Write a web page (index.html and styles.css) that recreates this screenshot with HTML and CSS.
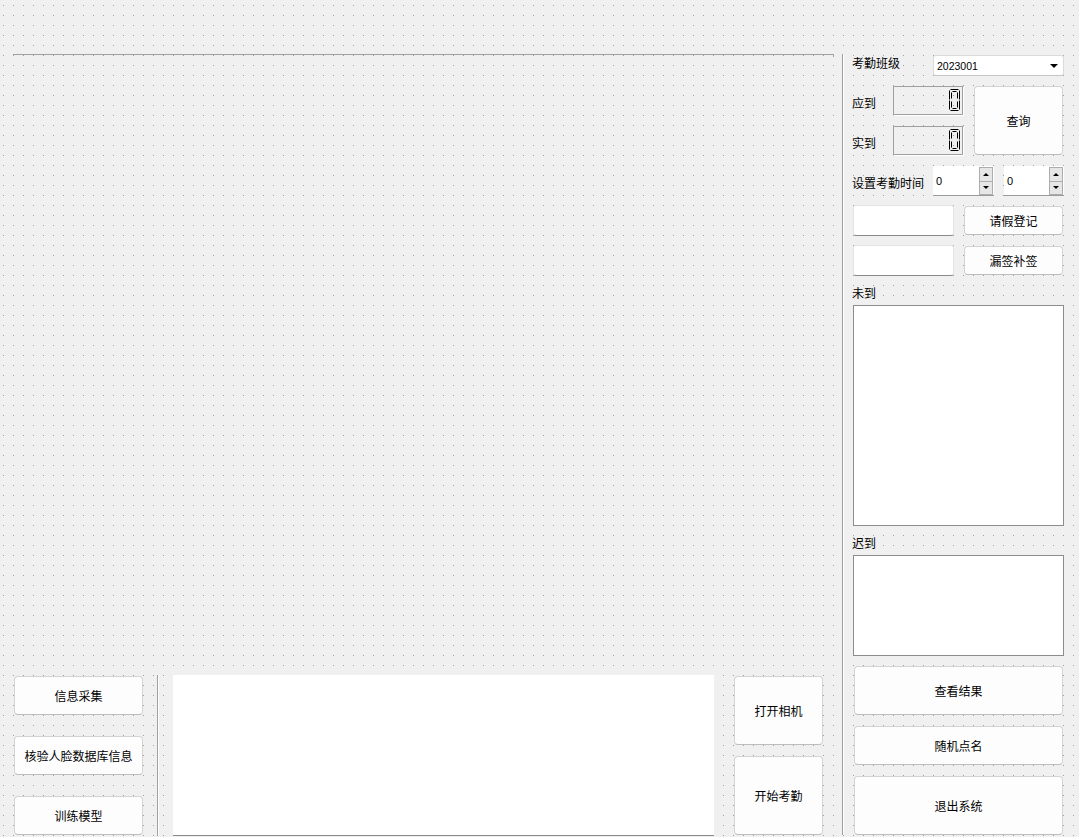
FILE: index.html
```html
<!DOCTYPE html>
<html lang="zh-CN">
<head>
<meta charset="utf-8">
<title>考勤系统</title>
<link rel="stylesheet" href="styles.css">
</head>
<body>
<div class="app">
  <div class="left">
    <div class="stage"><span class="tick"></span></div>
    <div class="bottom">
      <div class="btn-col">
        <button class="btn tool">信息采集</button>
        <button class="btn tool">核验人脸数据库信息</button>
        <button class="btn tool">训练模型</button>
      </div>
      <div class="vline"></div>
      <div class="log"></div>
      <div class="cam-col">
        <button class="btn cam-open">打开相机</button>
        <button class="btn cam-start">开始考勤</button>
      </div>
    </div>
  </div>

  <div class="right">
    <div class="row r-class">
      <span class="lbl w81 lbl-top">考勤班级</span>
      <div class="combo"><span class="combo-text">2023001</span><span class="combo-arrow"></span></div>
    </div>

    <div class="row r-count">
      <div class="lcd-col">
        <div class="lcd-row">
          <span class="lbl w41 lbl-mid">应到</span>
          <div class="lcd">
            <svg class="digit" width="11" height="22" viewBox="0 0 11 22">
              <g fill="none" stroke="#000" stroke-width="1">
                <polyline points="1.5,0.5 9.5,0.5"/>
                <polyline points="3.5,2.5 7.5,2.5"/>
                <polyline points="0.5,1.5 0.5,10.5"/>
                <polyline points="2.5,3.5 2.5,9.5"/>
                <polyline points="10.5,1.5 10.5,10.5"/>
                <polyline points="8.5,3.5 8.5,9.5"/>
                <polyline points="0.5,11.5 0.5,20.5"/>
                <polyline points="2.5,12.5 2.5,18.5"/>
                <polyline points="10.5,11.5 10.5,20.5"/>
                <polyline points="8.5,12.5 8.5,18.5"/>
                <polyline points="3.5,19.5 7.5,19.5"/>
                <polyline points="1.5,21.5 9.5,21.5"/>
              </g>
            </svg>
          </div>
        </div>
        <div class="lcd-row">
          <span class="lbl w41 lbl-mid">实到</span>
          <div class="lcd">
            <svg class="digit" width="11" height="22" viewBox="0 0 11 22">
              <g fill="none" stroke="#000" stroke-width="1">
                <polyline points="1.5,0.5 9.5,0.5"/>
                <polyline points="3.5,2.5 7.5,2.5"/>
                <polyline points="0.5,1.5 0.5,10.5"/>
                <polyline points="2.5,3.5 2.5,9.5"/>
                <polyline points="10.5,1.5 10.5,10.5"/>
                <polyline points="8.5,3.5 8.5,9.5"/>
                <polyline points="0.5,11.5 0.5,20.5"/>
                <polyline points="2.5,12.5 2.5,18.5"/>
                <polyline points="10.5,11.5 10.5,20.5"/>
                <polyline points="8.5,12.5 8.5,18.5"/>
                <polyline points="3.5,19.5 7.5,19.5"/>
                <polyline points="1.5,21.5 9.5,21.5"/>
              </g>
            </svg>
          </div>
        </div>
      </div>
      <button class="btn query">查询</button>
    </div>

    <div class="row r-time">
      <span class="lbl w81 lbl-mid">设置考勤时间</span>
      <div class="spin s1"><span class="spin-val">0</span><span class="spin-btns"><span class="sb up"></span><span class="sb down"></span></span></div>
      <div class="spin s2"><span class="spin-val">0</span><span class="spin-btns"><span class="sb up"></span><span class="sb down"></span></span></div>
    </div>

    <div class="row r-edit">
      <div class="edit"></div>
      <button class="btn small">请假登记</button>
    </div>
    <div class="row r-edit">
      <div class="edit"></div>
      <button class="btn small">漏签补签</button>
    </div>

    <span class="lbl sect">未到</span>
    <div class="list l-absent"></div>
    <span class="lbl sect">迟到</span>
    <div class="list l-late"></div>

    <button class="btn wide b-result">查看结果</button>
    <button class="btn wide b-random">随机点名</button>
    <button class="btn wide b-exit">退出系统</button>
  </div>
</div>
</body>
</html>
```

FILE: styles.css
```css
html, body {
  margin: 0;
  padding: 0;
}
body {
  width: 1079px;
  height: 837px;
  overflow: hidden;
  background-color: #f0f0f0;
  background-image:
    linear-gradient(to right, #f0f0f0 3px, transparent 3px, transparent 4px, #f0f0f0 4px),
    linear-gradient(to bottom, transparent 5px, #a0a0a0 5px, #a0a0a0 6px, transparent 6px);
  background-size: 10px 10px;
  font-family: "Noto Sans CJK SC", "Noto Sans", sans-serif;
  font-size: 12px;
  color: #000;
}

.app {
  display: flex;
  box-sizing: border-box;
  height: 837px;
  padding: 54px 0 0 13px;
}

/* ---------- left side ---------- */
.left {
  width: 821px;
  display: flex;
  flex-direction: column;
}
.stage {
  position: relative;
  height: 621px;
  border-top: 1px solid #a0a0a0;
  box-sizing: border-box;
}
.tick {
  position: absolute;
  right: 0;
  top: 0;
  width: 1px;
  height: 2px;
  background: #a0a0a0;
}
.bottom {
  display: flex;
  height: 161px;
}
.btn-col {
  display: flex;
  flex-direction: column;
  gap: 21px;
  margin: 1px 0 0 1px;
  width: 129px;
}
.vline {
  margin-left: 14px;
  width: 1px;
  height: 161px;
  background: #a0a0a0;
  box-shadow: 1px 0 0 #ffffff;
}
.log {
  margin-left: 15px;
  width: 541px;
  height: 161px;
  box-sizing: border-box;
  background: #ffffff;
  border-bottom: 1px solid #8a8a8a;
}
.cam-col {
  display: flex;
  flex-direction: column;
  gap: 11px;
  margin: 1px 0 0 20px;
  width: 89px;
}

/* ---------- buttons ---------- */
.btn {
  box-sizing: border-box;
  margin: 0;
  padding: 0;
  background: #fdfdfd;
  border: 1px solid #d3d3d3;
  border-bottom-color: #bdbdbd;
  border-radius: 4px;
  font-family: "Noto Sans CJK SC", "Noto Sans", sans-serif;
  font-size: 12px;
  color: #000;
  text-align: center;
}
.tool { height: 39px; width: 129px; }
.cam-open { height: 69px; }
.cam-start { height: 79px; }

/* ---------- right panel ---------- */
.right {
  box-sizing: border-box;
  margin-left: 8px;
  width: 237px;
  height: 781px;
  border-left: 1px solid #a0a0a0;
  box-shadow: inset 1px 0 0 #ffffff;
  padding-left: 10px;
  display: flex;
  flex-direction: column;
  align-items: flex-start;
}
.row {
  display: flex;
  align-items: flex-start;
}
.lbl {
  line-height: 12px;
  white-space: nowrap;
}
.w81 { width: 81px; margin-left: -1px; }
.w41 { width: 41px; margin-left: -1px; }
.lbl-top { margin-top: 2px; }
.lbl-mid { margin-top: 11px; }

.r-class { margin-top: 1px; height: 21px; }
.combo {
  box-sizing: border-box;
  width: 131px;
  height: 21px;
  background: #ffffff;
  border: 1px solid #dadada;
  border-bottom-color: #c4c4c4;
  border-radius: 3px;
  display: flex;
  align-items: center;
  justify-content: space-between;
  padding: 0 4px 0 3px;
}
.combo-text {
  font-family: "Liberation Sans", Arial, sans-serif;
  font-size: 10.5px;
  padding-top: 1px;
}
.combo-arrow {
  width: 0;
  height: 0;
  border-left: 4px solid transparent;
  border-right: 4px solid transparent;
  border-top: 4px solid #000;
  margin-right: 1px;
}

.r-count { margin-top: 10px; height: 70px; }
.lcd-col {
  display: flex;
  flex-direction: column;
  gap: 10px;
}
.lcd-row {
  display: flex;
  align-items: flex-start;
  height: 30px;
}
.lcd {
  box-sizing: border-box;
  width: 71px;
  height: 30px;
  border: 1px solid #a0a0a0;
  border-right-color: #ffffff;
  border-bottom-color: #ffffff;
  box-shadow: inset -1px -1px 0 #a0a0a0;
  display: flex;
  justify-content: flex-end;
  align-items: flex-start;
  padding: 2px 3px 0 0;
}
.digit { display: block; }
.query {
  margin-left: 10px;
  width: 89px;
  height: 69px;
}

.r-time { margin-top: 10px; height: 30px; }
.spin {
  box-sizing: border-box;
  height: 30px;
  background: #ffffff;
  border-bottom: 1px solid #9a9a9a;
  display: flex;
  align-items: center;
  justify-content: space-between;
  padding: 0 1px 0 3px;
}
.s1 { width: 61px; }
.s2 { width: 60px; margin-left: 10px; }
.spin-val {
  font-family: "Liberation Sans", Arial, sans-serif;
  font-size: 11px;
}
.spin-btns {
  display: flex;
  flex-direction: column;
  width: 14px;
}
.sb {
  box-sizing: border-box;
  height: 14px;
  background: #e6e6e6;
  border: 1px solid #adadad;
  display: flex;
  align-items: center;
  justify-content: center;
}
.sb.up { border-bottom: none; }
.sb::after {
  content: "";
  width: 0;
  height: 0;
  border-left: 3px solid transparent;
  border-right: 3px solid transparent;
}
.sb.up::after { border-bottom: 3px solid #000; }
.sb.down::after { border-top: 3px solid #000; }

.r-edit { margin-top: 9px; height: 31px; }
.edit {
  box-sizing: border-box;
  width: 101px;
  height: 31px;
  background: #ffffff;
  border: 1px solid #e4e4e4;
  border-bottom-color: #8a8a8a;
  border-radius: 3px;
}
.small {
  margin: 1px 0 0 10px;
  width: 99px;
  height: 29px;
}

.sect { margin: 11px 0 0 -1px; height: 12px; }
.list {
  box-sizing: border-box;
  width: 211px;
  background: #ffffff;
  border: 1px solid #8c8c8c;
  margin-top: 6px;
}
.l-absent { height: 221px; }
.l-late { height: 101px; }

.wide { width: 209px; margin-left: 1px; }
.b-result { margin-top: 10px; height: 49px; }
.b-random { margin-top: 11px; height: 39px; }
.b-exit { margin-top: 11px; height: 59px; }
```
